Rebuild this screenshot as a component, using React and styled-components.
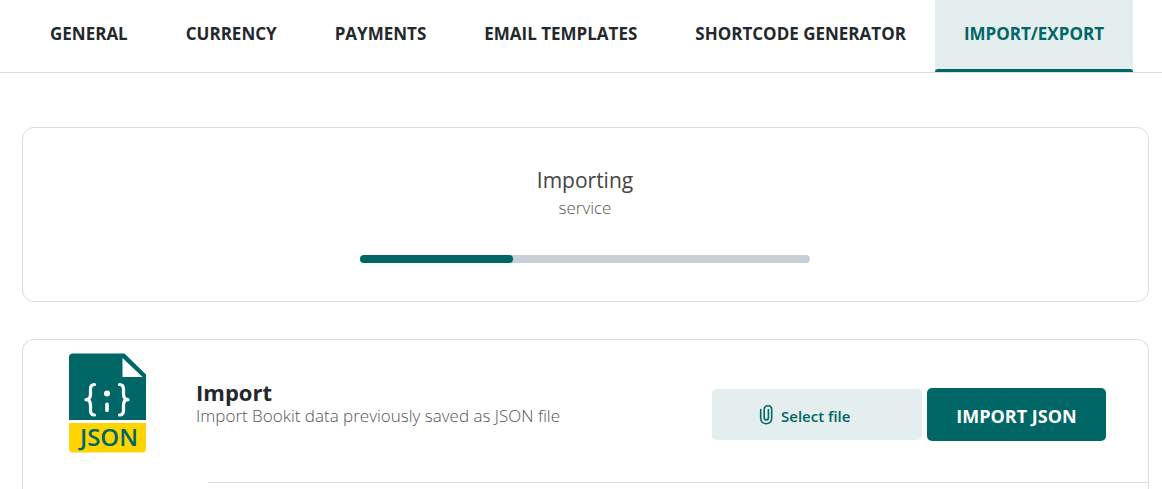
import React, { useRef } from "react";
import styled, { createGlobalStyle } from "styled-components";

const teal = "#006666";
const mint = "#e5eeef";
const line = "#dddddd";

const GlobalStyle = createGlobalStyle`
  *, *::before, *::after { box-sizing: border-box; }
  body {
    margin: 0;
    background: #fff;
    color: #23282d;
    font-family: "Open Sans", "Noto Sans", sans-serif;
  }
  button { font-family: inherit; cursor: pointer; border: 0; }
`;

const Page = styled.div`
  display: flex;
  flex-direction: column;
  min-height: 100vh;
`;

const Tabs = styled.nav`
  display: flex;
  padding: 0 21px;
  border-bottom: 1px solid ${line};
`;

const Tab = styled.a`
  position: relative;
  display: flex;
  align-items: center;
  height: 72px;
  padding: 0 29px 4px;
  font-size: 17px;
  font-weight: 700;
  line-height: 24px;
  white-space: nowrap;
  text-decoration: none;
  color: ${(p) => (p.$active ? teal : "#23282d")};
  background: ${(p) => (p.$active ? mint : "transparent")};

  &::after {
    content: "";
    position: absolute;
    left: 0;
    right: 0;
    bottom: 0;
    height: 3px;
    border-radius: 3px 3px 0 0;
    background: ${(p) => (p.$active ? teal : "transparent")};
  }
`;

const Content = styled.main`
  flex: 1;
  display: flex;
  flex-direction: column;
  gap: 37px;
  padding: 54px 13px 0 22px;
`;

const ProgressCard = styled.section`
  display: flex;
  flex-direction: column;
  align-items: center;
  padding: 36px 25px 38px 24px;
  border: 1px solid ${line};
  border-radius: 12px;
`;

const ProgressTitle = styled.h2`
  margin: 0;
  font-size: 21px;
  font-weight: 400;
  line-height: 32px;
  color: #444;
`;

const ProgressStep = styled.p`
  margin: 0 0 35px;
  font-size: 17px;
  font-weight: 300;
  line-height: 24px;
  color: #555;
`;

const Track = styled.div`
  width: 100%;
  max-width: 450px;
  height: 8px;
  border-radius: 4px;
  background: #c8d0d7;
`;

const Fill = styled.div`
  height: 100%;
  border-radius: 4px;
  background: ${teal};
`;

const TransferCard = styled.section`
  flex: 1;
  border: 1px solid ${line};
  border-bottom: 0;
  border-radius: 12px 12px 0 0;
`;

const TransferRow = styled.div`
  display: flex;
  align-items: flex-start;
  padding: 13px 42px 29px 46px;
`;

const RowText = styled.div`
  flex: 1;
  padding: 26px 0 0 50px;
`;

const RowTitle = styled.h3`
  margin: 0;
  font-size: 22px;
  font-weight: 700;
  line-height: 26px;
`;

const RowNote = styled.p`
  margin: 0;
  font-size: 17px;
  font-weight: 300;
  line-height: 22px;
  color: #555;
`;

const Actions = styled.div`
  display: flex;
  align-items: center;
  gap: 5px;
  padding-top: 35px;
`;

const SelectButton = styled.button`
  display: flex;
  align-items: center;
  gap: 6px;
  width: 210px;
  height: 51px;
  padding: 2px 46px 0;
  border-radius: 5px;
  background: ${mint};
  color: ${teal};
  font-size: 15px;
  font-weight: 600;
`;

const ImportButton = styled.button`
  width: 179px;
  height: 53px;
  padding: 2px 0 0;
  border-radius: 5px;
  background: ${teal};
  color: #fff;
  font-size: 18px;
  font-weight: 700;
`;

const Divider = styled.hr`
  margin: 0 0 0 185px;
  border: 0;
  border-top: 1px solid ${line};
`;

const FileArt = styled.svg`
  display: block;
  flex: none;
  width: 77px;
  height: 100px;
`;

const Clip = styled.svg`
  display: block;
  flex: none;
  width: 17px;
  height: 24px;
  margin-bottom: 2px;
`;

function JsonFileIcon() {
  return (
    <FileArt viewBox="0 0 77 100" aria-hidden="true">
      <path d="M4 0.5H55.5L77 21.5V67H0V4.500Q0 0.500 4 0.500Z" fill={teal} />
      <path d="M53.500 5V24H73.500Z" fill="#fff" />
      <g fill="none" stroke="#fff" strokeWidth="3.200" strokeLinecap="round" strokeLinejoin="round">
        <path d="M25.500 31.500C22.500 31.500 21.500 33 21.500 36V41C21.500 44.500 20 46.700 17 46.700C20 46.700 21.500 49 21.500 52.500V57.500C21.500 60.500 22.500 62 25.500 62" />
        <path d="M50.500 31.500C53.500 31.500 54.500 33 54.500 36V41C54.500 44.500 56 46.700 59 46.700C56 46.700 54.500 49 54.500 52.500V57.500C54.500 60.500 53.500 62 50.500 62" />
      </g>
      <circle cx="38" cy="40.500" r="3" fill="#fff" />
      <rect x="36.200" y="49.500" width="3.600" height="9.500" rx="1.600" fill="#fff" />
      <path d="M0 70H77V95.500Q77 99.500 73 99.500H4Q0 99.500 0 95.500Z" fill="#ffd400" />
      <text
        x="40"
        y="93"
        textAnchor="middle"
        fontFamily="'Open Sans', sans-serif"
        fontSize="24"
        fontWeight="600"
        fill={teal}
      >
        JSON
      </text>
    </FileArt>
  );
}

function PaperclipIcon() {
  return (
    <Clip viewBox="0 0 17 24" aria-hidden="true">
      <path
        d="M2.700 6.500V15C2.700 18.500 5 20.700 8.200 20.700S13.700 18.500 13.700 15V6.500C13.700 4 12 2.700 9.900 2.700S6.200 4 6.200 6.500V14.500C6.200 16 7 16.900 8.300 16.900S10.400 16 10.400 14.500V6.500"
        fill="none"
        stroke={teal}
        strokeWidth="1.600"
        strokeLinecap="round"
      />
    </Clip>
  );
}

const tabs = [
  "GENERAL",
  "CURRENCY",
  "PAYMENTS",
  "EMAIL TEMPLATES",
  "SHORTCODE GENERATOR",
  "IMPORT/EXPORT",
];

export default function App() {
  const fileInput = useRef(null);
  const progress = 34;

  return (
    <Page>
      <GlobalStyle />
      <Tabs>
        {tabs.map((name) => (
          <Tab key={name} href="#" $active={name === "IMPORT/EXPORT"}>
            {name}
          </Tab>
        ))}
      </Tabs>
      <Content>
        <ProgressCard>
          <ProgressTitle>Importing</ProgressTitle>
          <ProgressStep>service</ProgressStep>
          <Track role="progressbar" aria-valuenow={progress} aria-valuemin={0} aria-valuemax={100}>
            <Fill style={{ width: `${progress}%` }} />
          </Track>
        </ProgressCard>
        <TransferCard>
          <TransferRow>
            <JsonFileIcon />
            <RowText>
              <RowTitle>Import</RowTitle>
              <RowNote>Import Bookit data previously saved as JSON file</RowNote>
            </RowText>
            <Actions>
              <input ref={fileInput} type="file" accept=".json" hidden />
              <SelectButton type="button" onClick={() => fileInput.current.click()}>
                <PaperclipIcon />
                Select file
              </SelectButton>
              <ImportButton type="button">IMPORT JSON</ImportButton>
            </Actions>
          </TransferRow>
          <Divider />
        </TransferCard>
      </Content>
    </Page>
  );
}
